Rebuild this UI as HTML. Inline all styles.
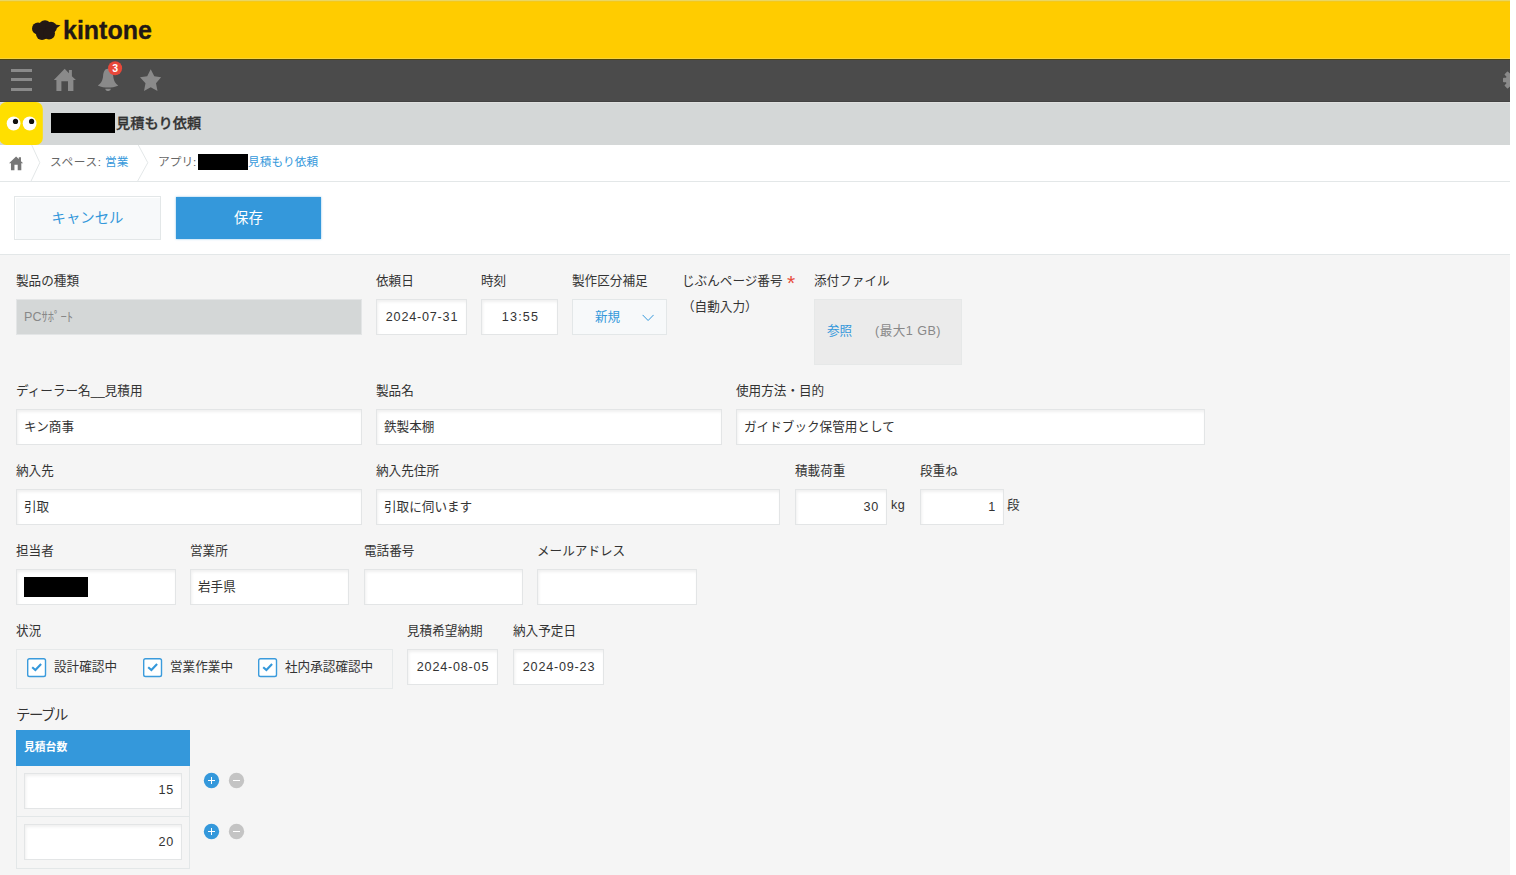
<!DOCTYPE html>
<html lang="ja">
<head>
<meta charset="utf-8">
<title>見積もり依頼</title>
<style>
*{box-sizing:border-box;margin:0;padding:0}
html,body{width:1516px;height:875px;overflow:hidden;background:#fff}
body{position:relative;font-family:"Liberation Sans","Noto Sans CJK JP",sans-serif;font-size:13px;color:#333}
.abs{position:absolute}
#wrap{position:absolute;left:0;top:0;width:1510px;height:875px;overflow:hidden;background:#fff}
#hdr{left:0;top:0;width:1510px;height:60px;background:linear-gradient(#e9d662 0,#e9d662 1px,#f3c81c 1px,#f3c81c 2px,#ffcc00 2px,#ffcc00 58px,#f6d23e 58px,#f6d23e 59px,#50460a 59px)}
#nav{left:0;top:60px;width:1510px;height:42px;background:#4b4b4b;border-bottom:1px solid #424242}
#appbar{left:0;top:102px;width:1510px;height:43px;background:linear-gradient(#dfe0df 0,#dfe0df 1px,#d4d7d7 1px)}
#crumb{left:0;top:145px;width:1510px;height:37px;background:#fff;border-bottom:1px solid #e3e7e8}
#form{left:0;top:254px;width:1510px;height:621px;background:#f5f5f5;border-top:1px solid #e3e7e8}
.lbl{position:absolute;font-size:13px;line-height:20px;height:20px;white-space:nowrap;color:#333}
.inp{position:absolute;height:35px;background:#fff;border:1px solid #e3e5e6;box-shadow:inset 1px 2px 3px #f0f0f0;font-size:13px;line-height:33px;padding:0 7px;white-space:nowrap;color:#333;overflow:hidden}
.inp.r{text-align:right}
.inp.c{text-align:center}
.red{background:#000;position:absolute}
.blue{color:#3498db}

.lbl{font-size:12.6px;margin-top:1px}
.inp{height:36px;line-height:34px;font-size:12.6px}
.inp.dis{background:#d4d7d7;color:#888;box-shadow:none}
.inp.num{letter-spacing:.8px}
.inp.date{text-align:center;padding:0 0 0 1px}
.sel{position:absolute;height:36px;background:#f7f9fa;border:1px solid #e3e7e8;color:#3498db;font-size:12.6px;line-height:34px;padding-left:22px}
.cb{position:absolute;width:18px;height:18px;background:#fff;border:1px solid #3498db}
.cb svg{position:absolute;left:-1px;top:-1px}
</style>
</head>
<body>
<div id="wrap">
<div id="hdr" class="abs">
<svg class="abs" style="left:31px;top:19px" width="31" height="22" viewBox="0 0 31 22"><g fill="#231815"><circle cx="7" cy="9.5" r="6"/><circle cx="14" cy="7.5" r="6.2"/><circle cx="20" cy="8.5" r="5.8"/><circle cx="11" cy="15" r="6"/><circle cx="18" cy="14.5" r="6"/><path d="M22 5.2 L29.5 6.2 L24 10.5 Z"/></g></svg>
<div class="abs" id="logo" style="left:63px;top:15px;font:bold 25px/30px 'Liberation Sans',sans-serif;color:#231815;letter-spacing:0;-webkit-text-stroke:.35px #231815">kintone</div>
</div>
<div id="nav" class="abs">
<svg class="abs" style="left:0;top:0" width="1510" height="42" viewBox="0 60 1510 42">
<g fill="#8a8a8a">
<rect x="11" y="69" width="21" height="3"/><rect x="11" y="78" width="21" height="3"/><rect x="11" y="88" width="21" height="3"/>
<path d="M64.7 68.8 L68.9 73.2 V70 H71.9 V76.2 L75.9 80 H73.4 V91 H68 V81.3 H61.4 V91 H56.4 V80 H53.8 Z"/>
<path d="M107.9 68.8 C104.6 68.8 103.4 72.3 103.1 76 C102.7 81 100.6 83.8 97.8 85.4 C101 87 105 87.6 108 87.6 C111 87.6 115.2 87 118.3 85.4 C115.6 83.8 113.6 81 113.2 76 C112.9 72.3 111.4 68.8 107.9 68.8 Z"/>
<path d="M105.3 88.7 H110.8 C110.5 90.5 109.3 91.1 108 91.1 C106.7 91.1 105.6 90.5 105.3 88.7 Z"/>
<path d="M150.7 69.2 L154.3 76.2 L161.1 77.2 L156 83.3 L157.5 90.9 L150.7 87.2 L144 90.9 L145.5 83.3 L140 77.2 L147.2 76.2 Z"/>
<g transform="translate(1513 80)"><circle r="7.3"/><rect x="-2.3" y="-10" width="4.6" height="20" rx="0.8" transform="rotate(0)"/><rect x="-2.3" y="-10" width="4.6" height="20" rx="0.8" transform="rotate(45)"/><rect x="-2.3" y="-10" width="4.6" height="20" rx="0.8" transform="rotate(90)"/><rect x="-2.3" y="-10" width="4.6" height="20" rx="0.8" transform="rotate(135)"/></g>
</g>
<circle cx="115.1" cy="68.3" r="7" fill="#e8483a"/>
<text x="115.1" y="72" text-anchor="middle" font-family="Liberation Sans, sans-serif" font-weight="bold" font-size="10.5" fill="#fff">3</text>
</svg>
</div>
<div id="appbar" class="abs">
<svg class="abs" style="left:0;top:0" width="44" height="43" viewBox="0 102 44 43"><rect x="-0.5" y="102" width="43.3" height="43" rx="7" fill="#ffdf00"/><circle cx="13.6" cy="123.5" r="6.9" fill="#fff"/><circle cx="29.6" cy="123.5" r="6.9" fill="#fff"/><circle cx="15.5" cy="121.4" r="2.6" fill="#111"/><circle cx="31.6" cy="121.4" r="2.6" fill="#111"/></svg>
<div class="red" style="left:51px;top:11px;width:64px;height:20px"></div>
<div class="abs" id="title" style="left:116px;top:10px;font-size:14.2px;font-weight:500;-webkit-text-stroke:.3px #333;line-height:22px;color:#333;white-space:nowrap">見積もり依頼</div>
</div>
<div id="crumb" class="abs">
<svg class="abs" style="left:9px;top:11.4px" width="14.6" height="15" viewBox="0 0.4 13.4 14.2" preserveAspectRatio="none"><path fill="#777" d="M6.5 0.8 L9 3.3 V1.5 H11 V5.3 L13 7.3 H11.3 V13.8 H8 V8.6 H5 V13.8 H1.8 V7.3 H0 Z"/></svg>
<svg class="abs" style="left:29px;top:0" width="14" height="36" viewBox="0 0 14 36"><path fill="none" stroke="#e3e7e8" stroke-width="1" d="M2.7 0 L10.8 17.7 L2.1 36"/></svg>
<div class="abs" id="bc1" style="left:50px;top:7px;font-size:11.7px;line-height:20px;color:#666;white-space:nowrap"><span style="letter-spacing:.6px">スペース:</span><span class="blue" style="margin-left:3.5px">営業</span></div>
<svg class="abs" style="left:136px;top:0" width="14" height="36" viewBox="0 0 14 36"><path fill="none" stroke="#e3e7e8" stroke-width="1" d="M2.3 0 L11.8 17.7 L1.7 36"/></svg>
<div class="abs" id="bc2" style="left:158px;top:7px;font-size:11.7px;line-height:20px;color:#666;white-space:nowrap">アプリ:</div>
<div class="red" style="left:198px;top:9px;width:50px;height:16px"></div>
<div class="abs blue" id="bc3" style="left:248px;top:7px;font-size:11.7px;line-height:20px;white-space:nowrap">見積もり依頼</div>
</div>
<div class="abs" id="cancel" style="left:14px;top:196px;width:147px;height:44px;background:#f7f9fa;border:1px solid #e3e7e8;color:#3498db;font-size:14.4px;line-height:42px;text-align:center;box-shadow:1px 1px 1px #fff inset">キャンセル</div>
<div class="abs" id="save" style="left:176px;top:197px;width:145px;height:42px;background:#3498db;color:#fff;font-size:14.4px;line-height:42px;text-align:center;box-shadow:0 0 2px rgba(52,152,219,.6)">保存</div>
<div id="form" class="abs"></div>
<div class="lbl" style="left:16px;top:270px">製品の種類</div>
<div class="inp dis" style="left:16px;top:299px;width:346px;">PCｻﾎﾟｰﾄ</div>
<div class="lbl" style="left:376px;top:270px">依頼日</div>
<div class="inp num date" style="left:376px;top:299px;width:91px;">2024-07-31</div>
<div class="lbl" style="left:481px;top:270px">時刻</div>
<div class="inp num c" style="left:481px;top:299px;width:77px;letter-spacing:1.2px;padding-left:9px">13:55</div>
<div class="lbl" style="left:572px;top:270px">製作区分補足</div>
<div class="sel" style="left:572px;top:299px;width:95px"><span>新規</span><svg width="12" height="8" viewBox="0 0 12 8" style="position:absolute;left:69px;top:14px"><path d="M0.6 0.9 L6.1 6.5 L11.6 0.9" fill="none" stroke="#3498db" stroke-width="1"/></svg></div>
<div class="lbl" style="left:682px;top:270px">じぶんページ番号 <span style="color:#e74c3c;font-size:21px;line-height:10px;position:relative;top:4.5px;left:1px">*</span></div>
<div class="lbl" style="left:682px;top:296px">（自動入力）</div>
<div class="lbl" style="left:814px;top:270px">添付ファイル</div>
<div class="abs" style="left:814px;top:299px;width:148px;height:66px;background:#ebebeb;border:1px solid #e6e8e8"></div>
<div class="lbl blue" style="left:827px;top:320px;font-size:12.6px">参照</div>
<div class="lbl" style="left:875px;top:320px;color:#888;letter-spacing:.45px">(最大1 GB)</div>
<div class="lbl" style="left:16px;top:380px">ディーラー名__見積用</div>
<div class="inp" style="left:16px;top:409px;width:346px;">キン商事</div>
<div class="lbl" style="left:376px;top:380px">製品名</div>
<div class="inp" style="left:376px;top:409px;width:346px;">鉄製本棚</div>
<div class="lbl" style="left:736px;top:380px">使用方法・目的</div>
<div class="inp" style="left:736px;top:409px;width:469px;">ガイドブック保管用として</div>
<div class="lbl" style="left:16px;top:460px">納入先</div>
<div class="inp" style="left:16px;top:489px;width:346px;">引取</div>
<div class="lbl" style="left:376px;top:460px">納入先住所</div>
<div class="inp" style="left:376px;top:489px;width:404px;">引取に伺います</div>
<div class="lbl" style="left:795px;top:460px">積載荷重</div>
<div class="inp num r" style="left:795px;top:489px;width:92px;">30</div>
<div class="lbl" style="left:891px;top:495px;margin-top:0;letter-spacing:.4px">kg</div>
<div class="lbl" style="left:920px;top:460px">段重ね</div>
<div class="inp num r" style="left:920px;top:489px;width:84px;">1</div>
<div class="lbl" style="left:1007px;top:495px;margin-top:0">段</div>
<div class="lbl" style="left:16px;top:540px">担当者</div>
<div class="inp" style="left:16px;top:569px;width:160px;"></div>
<div class="red" style="left:24px;top:577px;width:64px;height:20px"></div>
<div class="lbl" style="left:190px;top:540px">営業所</div>
<div class="inp" style="left:190px;top:569px;width:159px;">岩手県</div>
<div class="lbl" style="left:364px;top:540px">電話番号</div>
<div class="inp" style="left:364px;top:569px;width:159px;"></div>
<div class="lbl" style="left:537px;top:540px">メールアドレス</div>
<div class="inp" style="left:537px;top:569px;width:160px;"></div>
<div class="lbl" style="left:16px;top:620px">状況</div>
<div class="abs" style="left:16px;top:649px;width:377px;height:40px;border:1px solid #e6e9ea"></div>
<svg class="abs" style="left:26px;top:657px" width="21" height="21" viewBox="0 0 21 21"><rect x="1.7" y="1.7" width="17.8" height="17.8" rx="1.8" fill="#fff" stroke="#3b9bdc" stroke-width="1.4"/><path d="M6.2 10.2 L9.4 13 L15.1 7" fill="none" stroke="#3498db" stroke-width="2.1"/></svg>
<div class="lbl" style="left:54px;top:656px">設計確認中</div>
<svg class="abs" style="left:142px;top:657px" width="21" height="21" viewBox="0 0 21 21"><rect x="1.7" y="1.7" width="17.8" height="17.8" rx="1.8" fill="#fff" stroke="#3b9bdc" stroke-width="1.4"/><path d="M6.2 10.2 L9.4 13 L15.1 7" fill="none" stroke="#3498db" stroke-width="2.1"/></svg>
<div class="lbl" style="left:170px;top:656px">営業作業中</div>
<svg class="abs" style="left:257px;top:657px" width="21" height="21" viewBox="0 0 21 21"><rect x="1.7" y="1.7" width="17.8" height="17.8" rx="1.8" fill="#fff" stroke="#3b9bdc" stroke-width="1.4"/><path d="M6.2 10.2 L9.4 13 L15.1 7" fill="none" stroke="#3498db" stroke-width="2.1"/></svg>
<div class="lbl" style="left:285px;top:656px">社内承認確認中</div>
<div class="lbl" style="left:407px;top:620px">見積希望納期</div>
<div class="inp num date" style="left:407px;top:649px;width:91px;">2024-08-05</div>
<div class="lbl" style="left:513px;top:620px">納入予定日</div>
<div class="inp num date" style="left:513px;top:649px;width:91px;">2024-09-23</div>
<div class="lbl" style="left:16px;top:704px;font-size:14.4px;letter-spacing:-1.4px">テーブル</div>
<div class="abs" style="left:16px;top:730px;width:174px;height:36px;background:#3498db;color:#fff;font-size:10.8px;font-weight:bold;line-height:34px;padding-left:8px">見積台数</div>
<div class="abs" style="left:16px;top:766px;width:174px;height:51px;border:1px solid #e3e7e8;border-top:none"></div>
<div class="abs" style="left:16px;top:817px;width:174px;height:52px;border:1px solid #e3e7e8;border-top:none"></div>
<div class="inp num r" style="left:24px;top:773px;width:158px;line-height:32px">15</div>
<div class="inp num r" style="left:24px;top:824px;width:158px;">20</div>
<svg class="abs" style="left:203px;top:772px" width="17" height="17" viewBox="0 0 17 17"><circle cx="8.5" cy="8.5" r="7.7" fill="#3498db"/><path d="M5 8.5 H12 M8.5 5 V12" stroke="#fff" stroke-width="1"/></svg>
<svg class="abs" style="left:228px;top:772px" width="17" height="17" viewBox="0 0 17 17"><circle cx="8.5" cy="8.5" r="7.7" fill="#c4c4c4"/><path d="M5 8.5 H12" stroke="#fff" stroke-width="1"/></svg>
<svg class="abs" style="left:203px;top:823px" width="17" height="17" viewBox="0 0 17 17"><circle cx="8.5" cy="8.5" r="7.7" fill="#3498db"/><path d="M5 8.5 H12 M8.5 5 V12" stroke="#fff" stroke-width="1"/></svg>
<svg class="abs" style="left:228px;top:823px" width="17" height="17" viewBox="0 0 17 17"><circle cx="8.5" cy="8.5" r="7.7" fill="#c4c4c4"/><path d="M5 8.5 H12" stroke="#fff" stroke-width="1"/></svg>
</div>
</body>
</html>
